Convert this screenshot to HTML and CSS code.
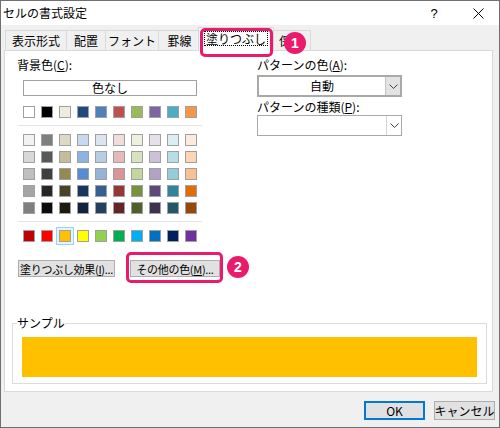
FILE: index.html
```html
<!DOCTYPE html>
<html lang="ja">
<head>
<meta charset="utf-8">
<title>セルの書式設定</title>
<link rel="stylesheet" href="styles.css">
</head>
<body>
<div class="window">
  <div class="titlebar">
    <span class="title">セルの書式設定</span>
    <span class="help">?</span>
    <span class="close"><svg width="11" height="11" viewBox="0 0 11 11"><path d="M0.5 0.5 L10.5 10.5 M10.5 0.5 L0.5 10.5" stroke="#000" stroke-width="1" fill="none"/></svg></span>
  </div>
  <div class="client">
    <div class="tabs">
      <div class="tab t1">表示形式</div>
      <div class="tab t2">配置</div>
      <div class="tab t3">フォント</div>
      <div class="tab t4">罫線</div>
      <div class="tab active"><span class="focus">塗りつぶし</span></div>
      <div class="tab t6">保護</div>
    </div>
    <div class="panel">
      <div class="top">
        <div class="left">
          <div class="label">背景色(<u>C</u>):</div>
          <div class="nofill">色なし</div>
          <div class="swrow first">
            <span class="sw" style="background:#ffffff"></span>
            <span class="sw" style="background:#000000"></span>
            <span class="sw" style="background:#eeece1"></span>
            <span class="sw" style="background:#1f497d"></span>
            <span class="sw" style="background:#4f81bd"></span>
            <span class="sw" style="background:#c0504d"></span>
            <span class="sw" style="background:#9bbb59"></span>
            <span class="sw" style="background:#8064a2"></span>
            <span class="sw" style="background:#4bacc6"></span>
            <span class="sw" style="background:#f79646"></span>
          </div>
          <div class="sep"></div>
          <div class="grid">
            <span class="sw" style="background:#f2f2f2"></span>
            <span class="sw" style="background:#7f7f7f"></span>
            <span class="sw" style="background:#ddd9c3"></span>
            <span class="sw" style="background:#c6d9f0"></span>
            <span class="sw" style="background:#dbe5f1"></span>
            <span class="sw" style="background:#f2dcdb"></span>
            <span class="sw" style="background:#ebf1dd"></span>
            <span class="sw" style="background:#e5e0ec"></span>
            <span class="sw" style="background:#dbeef3"></span>
            <span class="sw" style="background:#fdeada"></span>

            <span class="sw" style="background:#d8d8d8"></span>
            <span class="sw" style="background:#595959"></span>
            <span class="sw" style="background:#c4bd97"></span>
            <span class="sw" style="background:#8db3e2"></span>
            <span class="sw" style="background:#b8cce4"></span>
            <span class="sw" style="background:#e5b9b7"></span>
            <span class="sw" style="background:#d7e3bc"></span>
            <span class="sw" style="background:#ccc1d9"></span>
            <span class="sw" style="background:#b7dde8"></span>
            <span class="sw" style="background:#fbd5b5"></span>

            <span class="sw" style="background:#bfbfbf"></span>
            <span class="sw" style="background:#3f3f3f"></span>
            <span class="sw" style="background:#938953"></span>
            <span class="sw" style="background:#548dd4"></span>
            <span class="sw" style="background:#95b3d7"></span>
            <span class="sw" style="background:#d99694"></span>
            <span class="sw" style="background:#c3d69b"></span>
            <span class="sw" style="background:#b2a2c7"></span>
            <span class="sw" style="background:#92cddc"></span>
            <span class="sw" style="background:#fac08f"></span>

            <span class="sw" style="background:#a5a5a5"></span>
            <span class="sw" style="background:#262626"></span>
            <span class="sw" style="background:#494429"></span>
            <span class="sw" style="background:#17365d"></span>
            <span class="sw" style="background:#366092"></span>
            <span class="sw" style="background:#953734"></span>
            <span class="sw" style="background:#76923c"></span>
            <span class="sw" style="background:#5f497a"></span>
            <span class="sw" style="background:#31859b"></span>
            <span class="sw" style="background:#e36c09"></span>

            <span class="sw" style="background:#7f7f7f"></span>
            <span class="sw" style="background:#0c0c0c"></span>
            <span class="sw" style="background:#1d1b10"></span>
            <span class="sw" style="background:#0f243e"></span>
            <span class="sw" style="background:#244061"></span>
            <span class="sw" style="background:#632423"></span>
            <span class="sw" style="background:#4f6128"></span>
            <span class="sw" style="background:#3f3151"></span>
            <span class="sw" style="background:#205867"></span>
            <span class="sw" style="background:#974806"></span>
          </div>
          <div class="sep"></div>
          <div class="swrow std">
            <span class="sw" style="background:#c00000"></span>
            <span class="sw" style="background:#ff0000"></span>
            <span class="sw selected" style="background:#ffc000"></span>
            <span class="sw" style="background:#ffff00"></span>
            <span class="sw" style="background:#92d050"></span>
            <span class="sw" style="background:#00b050"></span>
            <span class="sw" style="background:#00b0f0"></span>
            <span class="sw" style="background:#0070c0"></span>
            <span class="sw" style="background:#002060"></span>
            <span class="sw" style="background:#7030a0"></span>
          </div>
          <div class="btnrow">
            <div class="btn effects">塗りつぶし効果(<u>I</u>)...</div>
            <div class="btn more">その他の色(<u>M</u>)...</div>
          </div>
        </div>
        <div class="right">
          <div class="label">パターンの色(<u>A</u>):</div>
          <div class="combo c1">
            <span class="combo-text">自動</span>
            <span class="combo-arrow"><svg width="9" height="5" viewBox="0 0 9 5"><path d="M0.5 0.5 L4.5 4.5 L8.5 0.5" stroke="#444" stroke-width="1" fill="none"/></svg></span>
          </div>
          <div class="label l2">パターンの種類(<u>P</u>):</div>
          <div class="combo c2">
            <span class="combo-text"></span>
            <span class="combo-arrow"><svg width="9" height="5" viewBox="0 0 9 5"><path d="M0.5 0.5 L4.5 4.5 L8.5 0.5" stroke="#444" stroke-width="1" fill="none"/></svg></span>
          </div>
        </div>
      </div>
      <div class="sample">
        <div class="sample-label">サンプル</div>
        <div class="sample-fill"></div>
      </div>
    </div>
    <div class="footer">
      <div class="btn ok">OK</div>
      <div class="btn cancel">キャンセル</div>
    </div>
  </div>
  <div class="annot a1"></div>
  <div class="badge b1">1</div>
  <div class="annot a2"></div>
  <div class="badge b2">2</div>
</div>
</body>
</html>
```

FILE: styles.css
```css
* { box-sizing: border-box; }
html, body { margin: 0; padding: 0; background: #fff; }
u { text-decoration: underline; text-underline-offset: 1px; }

.window {
  position: relative;
  width: 500px;
  height: 428px;
  border: 1px solid #6f6f6f;
  background: #f0f0f0;
  font-family: "Noto Sans CJK JP", "Noto Sans", sans-serif;
  font-size: 11px;
  color: #000;
  overflow: hidden;
}

.titlebar {
  height: 24px;
  background: #fff;
  display: flex;
  align-items: center;
}
.title { padding-left: 2px; line-height: 14px; font-size: 12px; }
.help {
  margin-left: auto;
  width: 46px;
  text-align: center;
  font-family: "Liberation Sans", sans-serif;
  font-size: 13px;
}
.close {
  width: 42px;
  display: flex;
  justify-content: center;
  align-items: center;
}

.client { padding: 0 5px 0 3px; }

.tabs {
  margin-top: 2px;
  height: 23px;
  display: flex;
  align-items: flex-end;
  position: relative;
  z-index: 1;
  padding-left: 1px;
}
.tab {
  height: 20px;
  border: 1px solid #d9d9d9;
  border-bottom: none;
  margin-right: -1px;
  background: #f0f0f0;
  display: flex;
  align-items: center;
  justify-content: center;
  line-height: 14px;
  font-size: 12px;
}
.t1 { width: 62px; }
.t2 { width: 40px; }
.t3 { width: 54px; }
.t4 { width: 43px; }
.t6 { width: 40px; }
.tab.active {
  width: 76px;
  height: 24px;
  margin: 0 -3px -1px -2px;
  background: #fff;
  position: relative;
  z-index: 2;
  padding-bottom: 2px;
}
.focus {
  border: 1px dotted #000;
  padding: 0 1px;
  line-height: 13px;
}

.panel {
  width: 489px;
  height: 342px;
  border: 1px solid #d9d9d9;
  background: #fff;
}

.top { display: flex; }
.left { width: 240px; padding-left: 12px; }
.right { padding-left: 12px; }

.label { margin-top: 7px; line-height: 14px; height: 14px; white-space: nowrap; font-size: 12px; }
.right .l2 { margin-top: 3px; }

.nofill {
  margin: 8px 0 0 6px;
  width: 174px;
  height: 16px;
  border: 1px solid #a0a0a0;
  text-align: center;
  line-height: 14px;
  font-size: 12px;
}

.sw {
  display: block;
  width: 12px;
  height: 12px;
  border: 1px solid #a0a0a0;
}
.swrow {
  display: flex;
  gap: 6px;
  margin-left: 6px;
}
.swrow.first { margin-top: 10px; }
.swrow.std { margin-top: 8px; }
.sw.selected {
  box-shadow: 0 0 0 2px #e5f3ff, 0 0 0 3px #99d1ff;
}

.sep {
  margin: 7px 0 0 1px;
  width: 184px;
  height: 1px;
  background: #e3e3e8;
}
.grid {
  margin: 8px 0 0 6px;
  display: grid;
  grid-template-columns: repeat(10, 12px);
  gap: 5px 6px;
}

.btnrow {
  display: flex;
  margin-top: 18px;
  margin-left: 1px;
}
.btn {
  height: 17px;
  background: #e1e1e1;
  border: 1px solid #adadad;
  display: flex;
  align-items: center;
  justify-content: center;
  line-height: 14px;
  white-space: nowrap;
}
.effects { width: 97px; letter-spacing: -0.3px; }
.more { width: 90px; margin-left: 15px; letter-spacing: -0.3px; }

.combo {
  margin-top: 3px;
  width: 145px;
  display: flex;
  background: #fff;
}
.combo.c1 { height: 22px; border: 2px solid #a9a9a9; }
.combo.c1 .combo-arrow { background: #e3e3e3; border-left: 1px solid #c4c4c4; }
.combo.c2 { height: 21px; margin-top: 1px; border: 1px solid #a9a9a9; }
.combo.c2 .combo-arrow { border-left: 1px solid #d4d4d4; }
.combo-text {
  flex: 1;
  text-align: center;
  line-height: 18px;
  font-size: 12px;
}
.combo-arrow {
  width: 15px;
  display: flex;
  align-items: center;
  justify-content: center;
}

.sample {
  margin: 46px 5px 0 7px;
  border: 1px solid #dcdcdc;
  padding: 0 9px 6px 9px;
}
.sample-label {
  display: table;
  margin: -8px 0 0 -5px;
  background: #fff;
  line-height: 14px;
  font-size: 12px;
}
.sample-fill {
  margin-top: 7px;
  height: 40px;
  background: #ffc000;
}

.footer {
  display: flex;
  justify-content: flex-end;
  gap: 9px;
  margin-top: 9px;
  margin-right: -1px;
}
.footer .btn { width: 61px; height: 19px; font-size: 12px; }
.btn.ok { border: 2px solid #0078d7; }

.annot {
  position: absolute;
  z-index: 5;
  border: 3px solid #ea1b6c;
  border-radius: 5px;
}
.a1 { left: 199px; top: 27px; width: 73px; height: 29px; }
.a2 { left: 125px; top: 251px; width: 97px; height: 31px; }
.badge {
  position: absolute;
  z-index: 6;
  width: 22px;
  height: 22px;
  border-radius: 50%;
  background: #ea1b6c;
  color: #fff;
  font-family: "Liberation Sans", sans-serif;
  font-weight: bold;
  font-size: 14px;
  display: flex;
  align-items: center;
  justify-content: center;
}
.b1 { left: 283px; top: 31px; }
.b2 { left: 226px; top: 255px; }
```
